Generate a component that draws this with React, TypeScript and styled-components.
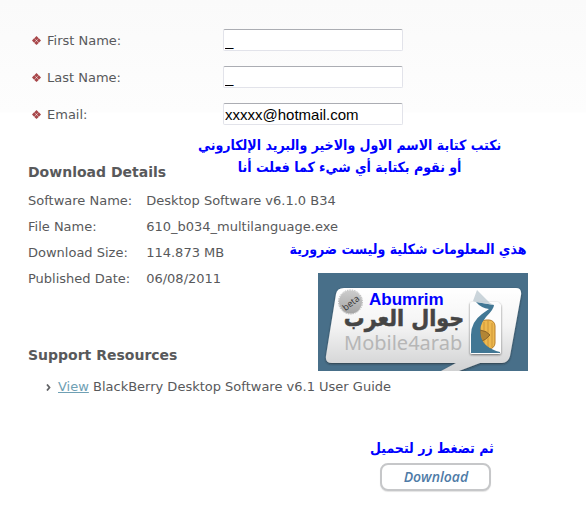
import React from 'react';
import styled, { createGlobalStyle } from 'styled-components';

const GlobalStyle = createGlobalStyle`
  body {
    margin: 0;
    background: #ffffff;
    color: #58595b;
    font: 13px/20px Verdana, 'DejaVu Sans', sans-serif;
  }
`;

const Page = styled.main`
  padding: 29px 28px 24px;
  background: linear-gradient(#fafafa, #fdfdfd 112px, #ffffff 113px);
`;

const Form = styled.form`
  display: grid;
  gap: 15px;
`;

const Field = styled.div`
  display: grid;
  grid-template-columns: 195px minmax(0, 180px);
  align-items: center;
`;

const FieldLabel = styled.label`
  display: flex;
  align-items: center;
  gap: 6px;
  padding: 2px 0 0 4px;
`;

const TextInput = styled.input`
  box-sizing: border-box;
  width: 100%;
  height: 22px;
  padding: 0 1px;
  border: 1px solid #e2e3ea;
  border-top-color: #abadb3;
  border-radius: 2px;
  background: #ffffff;
  color: #000000;
  font: 15px 'Liberation Sans', Arial, sans-serif;
`;

const Overlay = styled.div`
  display: grid;
  grid-template-columns: minmax(0, 1fr);
`;

const Info = styled.div`
  grid-area: 1 / 1;
  padding-top: 37px;
`;

const Section = styled.section`
  & + & {
    margin-top: 56px;
  }
`;

const Heading = styled.h2`
  margin: 0 0 9px;
  color: #58595b;
  font-size: 14px;
  line-height: 20px;
`;

const Details = styled.dl`
  display: grid;
  grid-template-columns: max-content 1fr;
  gap: 6px 14px;
  margin: 0;

  dd {
    margin: 0;
  }
`;

const Links = styled.ul`
  margin: 12px 0 0;
  padding: 0 0 0 18px;
  list-style: none;
`;

const LinkItem = styled.li`
  display: flex;
  align-items: center;
  gap: 7px;
`;

const Link = styled.a`
  color: #6fa0b4;
`;

const Notes = styled.div`
  grid-area: 1 / 1;
  justify-self: start;
  align-self: start;
  display: grid;
  justify-items: start;
  padding: 9px 0 0 170px;
`;

const Note = styled.p`
  margin: 0;
  color: #0000ff;
  font: bold 14px/22px 'DejaVu Sans Condensed', 'DejaVu Sans', sans-serif;
  text-align: center;
  white-space: nowrap;
`;

const MiddleNote = styled.div`
  display: grid;
  gap: 13px;
  margin: 60px 0 0 90px;
`;

const LogoSvg = styled.svg`
  display: block;
  margin-left: 30px;
`;

const DownloadArea = styled.div`
  display: grid;
  justify-items: center;
  gap: 4px;
  width: max-content;
  margin: 40px 0 0 342px;
`;

const DownloadButton = styled.button`
  width: 111px;
  height: 28px;
  margin-left: 8px;
  padding: 0;
  border: 2px solid #c6c7c9;
  border-radius: 8px;
  background: #ffffff;
  box-shadow: 0 1px 1px #e4e4e4;
  color: #4f7ba7;
  font: italic 600 14px/20px 'Open Sans', sans-serif;
`;

const Diamond = () => (
  <svg width="9" height="11" viewBox="0 0 9 11" aria-hidden="true">
    <path
      d="M4.5 0 6.7 2.2 4.5 4.2 2.3 2.2ZM2.1 2.3 4.2 4.5 2.1 6.7 0 4.5ZM6.9 2.3 9 4.5 6.9 6.7 4.8 4.5ZM4.5 4.8 6.7 6.9 4.5 9 2.3 6.9Z"
      fill="#a8474a"
    />
  </svg>
);

const Chevron = () => (
  <svg width="5" height="7" viewBox="0 0 5 7" aria-hidden="true">
    <path d="M1 .5 3.5 3.5 1 6.5" fill="none" stroke="#626366" strokeWidth="1.8" />
  </svg>
);

const Logo = () => (
  <LogoSvg width="210" height="98" viewBox="0 0 210 98" role="img" aria-label="Mobile4arab">
    <defs>
      <linearGradient id="bubble" x1="0" y1="0" x2="0" y2="1">
        <stop offset="0" stopColor="#ffffff" />
        <stop offset="0.45" stopColor="#f4f4f4" />
        <stop offset="1" stopColor="#d0d1d2" />
      </linearGradient>
      <linearGradient id="badge" x1="0" y1="0" x2="0" y2="1">
        <stop offset="0" stopColor="#cccccc" />
        <stop offset="1" stopColor="#a5a5a5" />
      </linearGradient>
      <filter id="shade" x="-20%" y="-20%" width="140%" height="140%">
        <feDropShadow dx="0" dy="1" stdDeviation="1" floodColor="#222222" floodOpacity="0.6" />
      </filter>
    </defs>
    <rect width="210" height="98" fill="#486f89" />
    <path
      d="M26 15H198Q204 15 203 22L192 83Q190 90 184 90H162L141 98H123L138 90H14Q7 90 8 83L18 21Q19 15 26 15Z"
      fill="url(#bubble)"
      filter="url(#shade)"
    />
    <circle cx="32.500" cy="29" r="11.500" fill="url(#badge)" />
    <circle cx="32.500" cy="29" r="12" fill="none" stroke="#b4b4b4" strokeDasharray="1.500 1" />
    <text
      x="33"
      y="33"
      transform="rotate(-38 33 30)"
      textAnchor="middle"
      fontFamily="Open Sans"
      fontSize="9"
      fill="#333333"
    >
      beta
    </text>
    <text
      x="86"
      y="53"
      direction="rtl"
      textAnchor="middle"
      fontFamily="DejaVu Sans Condensed, DejaVu Sans"
      fontWeight="bold"
      fontSize="23"
      fill="#454545"
      stroke="#454545"
      strokeWidth="0.5"
    >
      جوال العرب
    </text>
    <text x="26" y="77" fontFamily="Noto Sans" fontSize="20" fill="#b6b6b6">
      Mobile4arab
    </text>
    <text x="51" y="32" fontFamily="Liberation Sans" fontWeight="bold" fontSize="17" fill="#0000ff">
      Abumrim
    </text>
    <g filter="url(#shade)">
      <path d="M154 29H180L183 32V79Q183 81 181 81H154Q152 81 152 79V31Q152 29 154 29Z" fill="#fdfdfd" />
    </g>
    <rect x="162" y="47" width="15" height="29" rx="6" fill="#edb84e" stroke="#b87f2a" />
    <path d="M166 49V75M170 48V76M174 50V74" stroke="#ce9638" />
    <path d="M162 57Q169 58 172 62Q168 67 162 69Z" fill="#b28535" stroke="#8b6428" />
    <path
      d="M158 29 176 32Q176 36 168 44Q160 53 163 64Q166 75 182 79V80H153V62Q153 49 164 41L171 36Q163 35 158 29Z"
      fill="#417794"
    />
    <path d="M159 17 172 30 176 32 158 29 155 28Z" fill="#b9c7cf" opacity="0.75" />
  </LogoSvg>
);

const fields = [
  { id: 'first', label: 'First Name:', value: '_', type: 'text' },
  { id: 'last', label: 'Last Name:', value: '_', type: 'text' },
  { id: 'email', label: 'Email:', value: 'xxxxx@hotmail.com', type: 'email' },
];

const details = [
  ['Software Name:', 'Desktop Software v6.1.0 B34'],
  ['File Name:', '610_b034_multilanguage.exe'],
  ['Download Size:', '114.873 MB'],
  ['Published Date:', '06/08/2011'],
];

export default function App() {
  return (
    <>
      <GlobalStyle />
      <Page>
        <Form id="download-form" onSubmit={(e) => e.preventDefault()}>
          {fields.map((f) => (
            <Field key={f.id}>
              <FieldLabel htmlFor={f.id}>
                <Diamond />
                {f.label}
              </FieldLabel>
              <TextInput id={f.id} type={f.type} defaultValue={f.value} />
            </Field>
          ))}
        </Form>
        <Overlay>
          <Info>
            <Section>
              <Heading>Download Details</Heading>
              <Details>
                {details.map(([term, value]) => (
                  <React.Fragment key={term}>
                    <dt>{term}</dt>
                    <dd>{value}</dd>
                  </React.Fragment>
                ))}
              </Details>
            </Section>
            <Section>
              <Heading>Support Resources</Heading>
              <Links>
                <LinkItem>
                  <Chevron />
                  <span>
                    <Link href="#guide">View</Link> BlackBerry Desktop Software v6.1 User Guide
                  </span>
                </LinkItem>
              </Links>
            </Section>
          </Info>
          <Notes>
            <Note dir="rtl" lang="ar">
              نكتب كتابة الاسم الاول والاخير والبريد الإلكاروني
              <br />
              أو نقوم بكتابة أي شيء كما فعلت أنا
            </Note>
            <MiddleNote>
              <Note dir="rtl" lang="ar">
                هذي المعلومات شكلية وليست ضرورية
              </Note>
              <Logo />
            </MiddleNote>
          </Notes>
        </Overlay>
        <DownloadArea>
          <Note dir="rtl" lang="ar">
            ثم تضغط زر لتحميل
          </Note>
          <DownloadButton type="submit" form="download-form">
            Download
          </DownloadButton>
        </DownloadArea>
      </Page>
    </>
  );
}
